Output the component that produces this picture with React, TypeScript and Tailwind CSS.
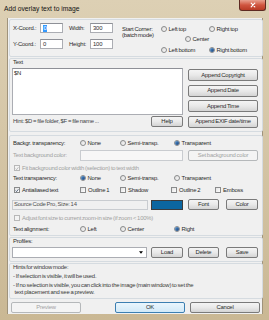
import type { ReactNode } from "react";

const Radio = ({ label, checked = false, disabled = false }: { label: string; checked?: boolean; disabled?: boolean }) => (
  <div className="flex items-center gap-[1.5px]">
    <span className="flex items-center justify-center w-[6px] h-[6px] rounded-full border-[0.7px] border-[#8a8b8c] bg-gradient-to-br from-[#dcdcdc] to-[#fbfbfb]">
      {checked && <span className="w-[3.4px] h-[3.4px] rounded-full bg-gradient-to-br from-[#5d9bd6] to-[#0f3a74]" />}
    </span>
    <span className={disabled ? "text-[#a0a0a0]" : ""}>{label}</span>
  </div>
);

const Check = ({ label, checked = false, disabled = false }: { label: string; checked?: boolean; disabled?: boolean }) => (
  <div className="flex items-center gap-[2px]">
    <span className={`flex items-center justify-center w-[6px] h-[6px] border-[0.7px] ${disabled ? "border-[#b8b8b8] bg-[#f4f4f4]" : "border-[#8a8b8c] bg-gradient-to-br from-[#e2e2e2] to-[#ffffff]"}`}>
      {checked && (
        <svg viewBox="0 0 10 10" className="w-[5px] h-[5px]">
          <path d="M1.5 5.2 L4 7.8 L8.6 1.8" fill="none" stroke={disabled ? "#a8a8a8" : "#2b3f5c"} strokeWidth="1.8" />
        </svg>
      )}
    </span>
    <span className={disabled ? "text-[#a0a0a0]" : ""}>{label}</span>
  </div>
);

const Btn = ({ children, className = "", disabled = false, focused = false }: { children: ReactNode; className?: string; disabled?: boolean; focused?: boolean }) => (
  <div
    className={`flex items-center justify-center rounded-[2px] border ${
      focused ? "border-[#3c7fb1] bg-gradient-to-b from-[#eaf6fd] to-[#d2e9f7]" : disabled ? "border-[#b5b8ba] bg-[#f4f4f4] text-[#a3a3a3]" : "border-[#7a7a7a] bg-gradient-to-b from-[#f4f4f4] via-[#e9e9e9] to-[#d4d4d4]"
    } ${className}`}
  >
    {children}
  </div>
);

const Input = ({ children, className = "" }: { children?: ReactNode; className?: string }) => (
  <div className={`flex items-center h-[10px] bg-white border border-[#abadb3] border-t-[#8e9097] pl-[2px] ${className}`}>{children}</div>
);

const Group = ({ children, className = "" }: { children: ReactNode; className?: string }) => (
  <div className={`ml-[1px] w-[254px] border border-[#d5dbe0] rounded-[2px] ${className}`}>{children}</div>
);

export default function App() {
  return (
    <div className="w-[269px] h-[320px] flex flex-col bg-gradient-to-b from-[#ddd0b4] to-[#cab894] text-[5.9px] leading-[7px] tracking-[-0.2px] [word-spacing:-0.5px] whitespace-nowrap text-[#2a2a2a] font-['Liberation_Sans',Arial,sans-serif] overflow-hidden">
      {/* title bar */}
      <div className="h-[18px] flex items-start shrink-0">
        <span className="pl-[4px] pt-[4.5px] text-[6.7px] tracking-normal [word-spacing:0px] text-[#111]">Add overlay text to image</span>
        <div className="ml-auto mr-[3px] w-[27px] h-[11px] rounded-b-[3px] border border-t-0 border-[#5e2a22] bg-gradient-to-b from-[#e8a08e] via-[#d0553f] to-[#b83a24] flex items-center justify-center">
          <svg viewBox="0 0 10 10" className="w-[6px] h-[6px]">
            <path d="M2 2 L8 8 M8 2 L2 8" stroke="#fff" strokeWidth="2" strokeLinecap="round" />
          </svg>
        </div>
      </div>

      {/* client area */}
      <div className="mx-[7px] w-[256px] h-[296px] bg-[#f0f0f0] border-x border-[#9f937b] flex flex-col shrink-0">
        {/* coordinates */}
        <Group className="mt-[1px] h-[38px] flex pl-[3px] pt-[3px]">
          <div className="flex flex-col gap-[6px]">
            <div className="flex items-center h-[10px]">
              <span className="w-[27px]">X-Coord.:</span>
              <Input className="w-[23px]">
                <span className="bg-[#3399ff] text-white px-[0.5px]">0</span>
              </Input>
              <span className="ml-[6px] w-[21px]">Width:</span>
              <Input className="w-[23px]">300</Input>
            </div>
            <div className="flex items-center h-[10px]">
              <span className="w-[27px]">Y-Coord.:</span>
              <Input className="w-[23px]">0</Input>
              <span className="ml-[6px] w-[21px]">Height:</span>
              <Input className="w-[23px]">100</Input>
            </div>
          </div>
          <div className="ml-[9px] w-[39px] mt-[3px] leading-[6px]">
            Start Corner:
            <br />
            (batch mode)
          </div>
          <div className="flex flex-col mt-[1px]">
            <div className="flex items-center h-[10px]">
              <div className="w-[48px]"><Radio label="Left top" /></div>
              <Radio label="Right top" />
            </div>
            <div className="flex items-center h-[10px] pl-[24px]">
              <Radio label="Center" />
            </div>
            <div className="flex items-center h-[10px] mt-[1px]">
              <div className="w-[48px]"><Radio label="Left bottom" /></div>
              <Radio label="Right bottom" checked />
            </div>
          </div>
        </Group>

        {/* text */}
        <Group className="mt-[1px] h-[74px] flex">
          <div className="flex flex-col pl-[2px] w-[173px]">
            <div className="h-[7px] pl-[1px]">Text</div>
            <div className="mt-[2px] w-[171px] h-[47px] bg-white border border-[#abadb3] border-t-[#8e9097] pl-[1px] pt-[1px]">$N</div>
            <div className="mt-[1px] h-[11px] flex items-center">
              <span className="pl-[1px] text-[#444]">Hint: $D = file folder, $F = file name ...</span>
              <Btn className="ml-auto w-[32px] h-[11px]">Help</Btn>
            </div>
          </div>
          <div className="ml-[5px] w-[70px] mt-[10px] flex flex-col gap-[3.5px]">
            <Btn className="h-[12px]">Append Copyright</Btn>
            <Btn className="h-[12px]">Append Date</Btn>
            <Btn className="h-[12px]">Append Time</Btn>
            <Btn className="h-[12px]">Append EXIF date/time</Btn>
          </div>
        </Group>

        {/* appearance */}
        <Group className="mt-[3px] h-[101px] flex flex-col pt-[2px]">
          <div className="flex items-center h-[10px] pl-[3px]">
            <span className="w-[67px]">Backgr. transparency:</span>
            <div className="w-[40px]"><Radio label="None" /></div>
            <div className="w-[54px]"><Radio label="Semi-transp." /></div>
            <Radio label="Transparent" checked />
          </div>
          <div className="flex items-center h-[11px] mt-[2px] pl-[3px]">
            <span className="w-[67px] text-[#a0a0a0]">Text background color:</span>
            <div className="w-[103px] h-[11px] border border-[#c9ccd0] bg-[#f7f7f7]" />
            <Btn disabled className="ml-[5px] w-[70px] h-[11px]">Set background color</Btn>
          </div>
          <div className="flex items-center h-[10px] mt-[2px] pl-[4px]">
            <Check label="Fit background color width (selection) to text width" checked disabled />
          </div>
          <div className="flex items-center h-[10px] pl-[3px]">
            <span className="w-[67px]">Text transparency:</span>
            <div className="w-[40px]"><Radio label="None" checked /></div>
            <div className="w-[54px]"><Radio label="Semi-transp." /></div>
            <Radio label="Transparent" />
          </div>
          <div className="flex items-center h-[10px] mt-[2px] pl-[3px]">
            <div className="w-[67px] pl-[1px]"><Check label="Antialiased text" checked /></div>
            <div className="w-[40px]"><Check label="Outline 1" /></div>
            <div className="w-[51px]"><Check label="Shadow" /></div>
            <div className="w-[44px]"><Check label="Outline 2" /></div>
            <Check label="Emboss" />
          </div>
          <div className="flex items-center h-[11px] mt-[4px] pl-[2px]">
            <div className="w-[136px] h-[10px] border border-[#c9ccd0] bg-[#f0f0f0] flex items-center pl-[1px] text-[#505050]">Source Code Pro, Size: 14</div>
            <div className="ml-[3px] w-[32px] h-[10px] border border-[#3b3b3b] bg-[#0b66a0]" />
            <Btn className="ml-[5px] w-[31px] h-[11px]">Font</Btn>
            <Btn className="ml-[7px] w-[32px] h-[11px]">Color</Btn>
          </div>
          <div className="flex items-center h-[10px] mt-[3px] pl-[4px]">
            <Check label="Adjust font size to current zoom-in size (if zoom < 100%)" disabled />
          </div>
          <div className="flex items-center h-[10px] mt-[1px] pl-[3px]">
            <span className="w-[67px]">Text alignment:</span>
            <div className="w-[40px]"><Radio label="Left" /></div>
            <div className="w-[54px]"><Radio label="Center" /></div>
            <Radio label="Right" checked />
          </div>
        </Group>

        {/* profiles */}
        <Group className="mt-[1px] h-[25px] flex flex-col">
          <div className="h-[7px] pl-[3px]">Profiles:</div>
          <div className="flex items-center h-[11px] mt-[2px] pl-[2px]">
            <div className="w-[135px] h-[11px] bg-white border border-[#abadb3] flex items-center justify-end pr-[3px]">
              <svg viewBox="0 0 6 4" className="w-[4px] h-[3px]">
                <path d="M0 0 H6 L3 4 Z" fill="#000" />
              </svg>
            </div>
            <Btn className="ml-[4px] w-[32px] h-[11px]">Load</Btn>
            <Btn className="ml-[5px] w-[31px] h-[11px]">Delete</Btn>
            <Btn className="ml-[7px] w-[32px] h-[11px]">Save</Btn>
          </div>
        </Group>

        {/* hints */}
        <Group className="mt-[1px] h-[36px] flex flex-col pl-[3px] text-[#3a3a3a]">
          <div className="h-[7px]">Hints for window mode:</div>
          <div className="h-[7px] mt-[2px]">- If selection is visible, it will be used.</div>
          <div className="h-[7px] mt-[2px]">- If no selection is visible, you can click into the image (main window) to set the</div>
          <div className="h-[7px] pl-[1.5px]">text placement and see a preview.</div>
        </Group>

        {/* dialog buttons */}
        <div className="flex items-center h-[11px] mt-[3px]">
          <Btn disabled className="ml-[3px] w-[70px] h-[11px]">Preview</Btn>
          <Btn focused className="ml-[34px] w-[70px] h-[11px]">OK</Btn>
          <Btn className="ml-[5px] w-[70px] h-[11px]">Cancel</Btn>
        </div>
      </div>
    </div>
  );
}
